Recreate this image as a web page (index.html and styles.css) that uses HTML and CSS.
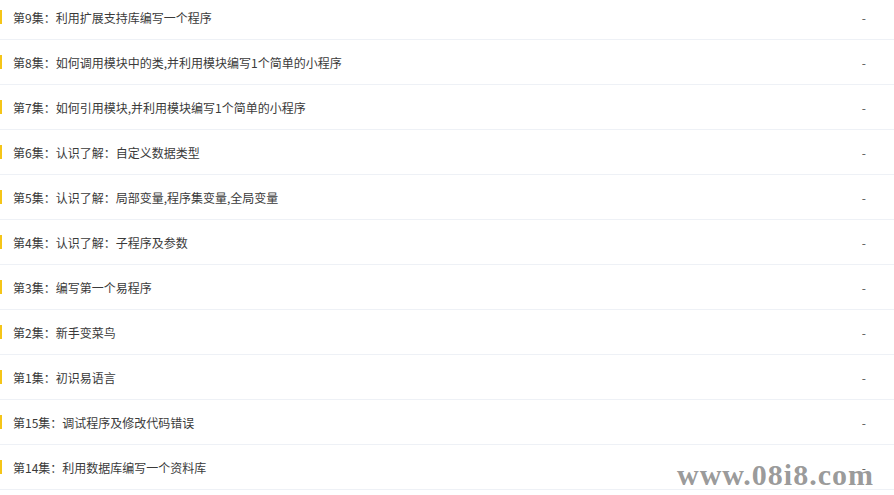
FILE: index.html
```html
<!DOCTYPE html>
<html lang="zh">
<head>
<meta charset="utf-8">
<link rel="stylesheet" href="styles.css">
</head>
<body>
<ul class="list">
  <li class="row"><span class="bar"></span><span class="title">第9集：利用扩展支持库编写一个程序</span><span class="dash">-</span></li>
  <li class="row"><span class="bar"></span><span class="title">第8集：如何调用模块中的类,并利用模块编写1个简单的小程序</span><span class="dash">-</span></li>
  <li class="row"><span class="bar"></span><span class="title">第7集：如何引用模块,并利用模块编写1个简单的小程序</span><span class="dash">-</span></li>
  <li class="row"><span class="bar"></span><span class="title">第6集：认识了解：自定义数据类型</span><span class="dash">-</span></li>
  <li class="row"><span class="bar"></span><span class="title">第5集：认识了解：局部变量,程序集变量,全局变量</span><span class="dash">-</span></li>
  <li class="row"><span class="bar"></span><span class="title">第4集：认识了解：子程序及参数</span><span class="dash">-</span></li>
  <li class="row"><span class="bar"></span><span class="title">第3集：编写第一个易程序</span><span class="dash">-</span></li>
  <li class="row"><span class="bar"></span><span class="title">第2集：新手变菜鸟</span><span class="dash">-</span></li>
  <li class="row"><span class="bar"></span><span class="title">第1集：初识易语言</span><span class="dash">-</span></li>
  <li class="row"><span class="bar"></span><span class="title">第15集：调试程序及修改代码错误</span><span class="dash">-</span></li>
  <li class="row"><span class="bar"></span><span class="title">第14集：利用数据库编写一个资料库</span><span class="dash">-</span></li>
</ul>
<div class="watermark">www.08i8.com</div>
</body>
</html>
```

FILE: styles.css
```css
html, body {
  margin: 0;
  padding: 0;
  background: #fff;
  overflow: hidden;
}
body {
  width: 894px;
  height: 495px;
  position: relative;
  font-family: "Noto Sans CJK SC", "Noto Sans", sans-serif;
  font-size: 12px;
  color: #3a3a3a;
}
.list {
  list-style: none;
  margin: -5px 0 0 0;
  padding: 0;
}
.row {
  display: flex;
  align-items: center;
  height: 44px;
  border-bottom: 1px solid #eef1f6;
  padding-right: 28px;
}
.bar {
  width: 2px;
  height: 14px;
  background: #f5c518;
  flex: none;
}
.title {
  margin-left: 11px;
  flex: 1;
  white-space: nowrap;
}
.dash {
  color: #555;
}
.watermark {
  position: absolute;
  left: 677px;
  top: 458px;
  font-family: "Liberation Serif", serif;
  font-weight: bold;
  font-size: 30px;
  line-height: 34px;
  color: rgba(128, 128, 128, 0.8);
  letter-spacing: 1px;
}
```
